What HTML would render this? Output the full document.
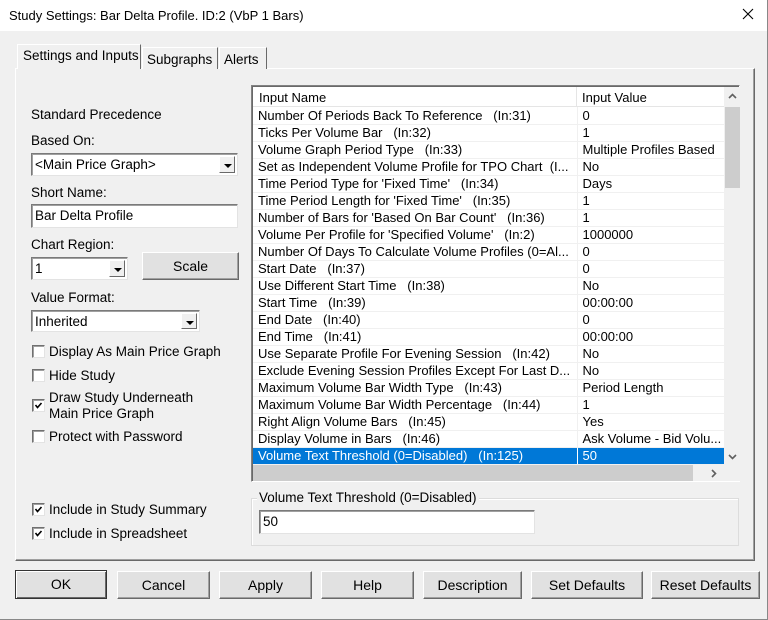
<!DOCTYPE html>
<html><head><style>
*{box-sizing:border-box;margin:0;padding:0}
body{width:768px;height:620px;background:#f0f0f0;font-family:"Liberation Sans",sans-serif;font-size:13px;color:#000;position:relative;overflow:hidden}
.a{position:absolute;white-space:nowrap}
.L{font-size:13.5px}
.title{left:0;top:0;width:768px;height:31px;background:#fff;border-right:1px solid #888}
.panel{left:15px;top:68px;width:740px;height:493px;border:1px solid #fff;border-right-color:#696969;border-bottom-color:#696969;box-shadow:inset -1px -1px 0 #a0a0a0}
.tab{top:46px;height:22px;border:1px solid #fff;border-right-color:#696969;border-bottom:none;padding:3px 4px;background:#f0f0f0;font-size:13.5px}
.edit{background:#fff;border:1px solid #7a7a7a;border-right-color:#e3e3e3;border-bottom-color:#e3e3e3;box-shadow:inset 1px 1px 0 #a0a0a0;padding:3px 3px;font-size:13.5px}
.dd{position:absolute;right:2px;top:2px;width:16px;bottom:2px;background:#f0f0f0;border:1px solid #fff;border-right-color:#696969;border-bottom-color:#696969}
.dd:after{content:"";position:absolute;left:4px;top:7px;border-left:4px solid transparent;border-right:4px solid transparent;border-top:4px solid #000}
.btn{background:#e1e1e1;border:1px solid #fff;border-right-color:#696969;border-bottom-color:#696969;box-shadow:inset -1px -1px 0 #a0a0a0;text-align:center;line-height:26px;font-size:14px}
.cb{width:13px;height:13px;background:#fff;border:1px solid #707070;border-right-color:#e3e3e3;border-bottom-color:#e3e3e3;box-shadow:inset 1px 1px 0 #a0a0a0}
table{border-collapse:collapse;font-size:13px}
td{height:17px;padding:0 0 0 5px;border-bottom:1px solid #f0f0f0;white-space:nowrap;overflow:hidden}
td.v{border-left:1px solid #f0f0f0}
tr.sel td{background:#0078d7;color:#fff}
</style></head><body>
<div class="a title"><span class="a" style="left:9px;top:8px;font-size:13px">Study Settings: Bar Delta Profile. ID:2 (VbP 1 Bars)</span>
<svg class="a" style="left:742px;top:8px" width="12" height="12"><path d="M1 1L11 11M11 1L1 11" stroke="#000" stroke-width="1.1"/></svg></div>
<div class="a" style="left:767px;top:0;width:1px;height:620px;background:#888"></div>
<div class="a" style="left:0;top:619px;width:768px;height:1px;background:#888"></div>

<div class="a panel"></div>
<div class="a tab" style="left:17px;top:44px;height:25px;width:124px;border-left:1px solid #fff;padding-left:5px">Settings and Inputs</div>
<div class="a tab" style="left:142px;top:47px;width:76px;padding-top:4px">Subgraphs</div>
<div class="a tab" style="left:219px;top:47px;width:48px;padding-top:4px">Alerts</div>

<div class="a L" style="left:31px;top:107px">Standard Precedence</div>
<div class="a L" style="left:31px;top:133px">Based On:</div>
<div class="a edit" style="left:31px;top:153px;width:207px;height:23px">&lt;Main Price Graph&gt;<div class="dd"></div></div>
<div class="a L" style="left:31px;top:185px">Short Name:</div>
<div class="a edit" style="left:31px;top:204px;width:207px;height:24px">Bar Delta Profile</div>
<div class="a L" style="left:31px;top:237px">Chart Region:</div>
<div class="a edit" style="left:31px;top:257px;width:97px;height:23px">1<div class="dd"></div></div>
<div class="a btn" style="left:142px;top:252px;width:97px;height:28px">Scale</div>
<div class="a L" style="left:31px;top:290px">Value Format:</div>
<div class="a edit" style="left:31px;top:310px;width:169px;height:22px">Inherited<div class="dd"></div></div>

<div class="a cb" style="left:32px;top:345px"></div><div class="a L" style="left:49px;top:344px">Display As Main Price Graph</div>
<div class="a cb" style="left:32px;top:369px"></div><div class="a L" style="left:49px;top:368px">Hide Study</div>
<div class="a cb" style="left:32px;top:399px"><svg width="11" height="11" style="position:absolute;left:0;top:0"><path d="M2.5 5L4.5 7.5L8.5 3" stroke="#000" stroke-width="1.6" fill="none"/></svg></div>
<div class="a L" style="left:49px;top:390px;line-height:16px">Draw Study Underneath<br>Main Price Graph</div>
<div class="a cb" style="left:32px;top:430px"></div><div class="a L" style="left:49px;top:429px">Protect with Password</div>
<div class="a cb" style="left:32px;top:503px"><svg width="11" height="11" style="position:absolute;left:0;top:0"><path d="M2.5 5L4.5 7.5L8.5 3" stroke="#000" stroke-width="1.6" fill="none"/></svg></div><div class="a L" style="left:49px;top:502px">Include in Study Summary</div>
<div class="a cb" style="left:32px;top:527px"><svg width="11" height="11" style="position:absolute;left:0;top:0"><path d="M2.5 5L4.5 7.5L8.5 3" stroke="#000" stroke-width="1.6" fill="none"/></svg></div><div class="a L" style="left:49px;top:526px">Include in Spreadsheet</div>

<div class="a" style="left:251px;top:85px;width:489px;height:397px;background:#fff;border:1px solid #828282;border-right-color:#fff;border-bottom-color:#fff;box-shadow:inset 1px 1px 0 #696969">
 <div class="a" style="left:1px;top:1px;width:471px;height:20px;border-bottom:1px solid #e5e5e5">
  <span class="a" style="left:6px;top:3px">Input Name</span>
  <div class="a" style="left:323px;top:0;width:1px;height:20px;background:#e5e5e5"></div>
  <span class="a" style="left:329px;top:3px">Input Value</span>
 </div>
 <table class="a" style="left:1px;top:21px;width:471px;table-layout:fixed">
 <col style="width:324px"><col style="width:147px">
 <tr><td>Number Of Periods Back To Reference&nbsp;&nbsp; (In:31)</td><td class="v">0</td></tr>
 <tr><td>Ticks Per Volume Bar&nbsp;&nbsp; (In:32)</td><td class="v">1</td></tr>
 <tr><td>Volume Graph Period Type&nbsp;&nbsp; (In:33)</td><td class="v">Multiple Profiles Based</td></tr>
 <tr><td>Set as Independent Volume Profile for TPO Chart&nbsp; (I...</td><td class="v">No</td></tr>
 <tr><td>Time Period Type for 'Fixed Time'&nbsp;&nbsp; (In:34)</td><td class="v">Days</td></tr>
 <tr><td>Time Period Length for 'Fixed Time'&nbsp;&nbsp; (In:35)</td><td class="v">1</td></tr>
 <tr><td>Number of Bars for 'Based On Bar Count'&nbsp;&nbsp; (In:36)</td><td class="v">1</td></tr>
 <tr><td>Volume Per Profile for 'Specified Volume'&nbsp;&nbsp; (In:2)</td><td class="v">1000000</td></tr>
 <tr><td>Number Of Days To Calculate Volume Profiles (0=Al...</td><td class="v">0</td></tr>
 <tr><td>Start Date&nbsp;&nbsp; (In:37)</td><td class="v">0</td></tr>
 <tr><td>Use Different Start Time&nbsp;&nbsp; (In:38)</td><td class="v">No</td></tr>
 <tr><td>Start Time&nbsp;&nbsp; (In:39)</td><td class="v">00:00:00</td></tr>
 <tr><td>End Date&nbsp;&nbsp; (In:40)</td><td class="v">0</td></tr>
 <tr><td>End Time&nbsp;&nbsp; (In:41)</td><td class="v">00:00:00</td></tr>
 <tr><td>Use Separate Profile For Evening Session&nbsp;&nbsp; (In:42)</td><td class="v">No</td></tr>
 <tr><td>Exclude Evening Session Profiles Except For Last D...</td><td class="v">No</td></tr>
 <tr><td>Maximum Volume Bar Width Type&nbsp;&nbsp; (In:43)</td><td class="v">Period Length</td></tr>
 <tr><td>Maximum Volume Bar Width Percentage&nbsp;&nbsp; (In:44)</td><td class="v">1</td></tr>
 <tr><td>Right Align Volume Bars&nbsp;&nbsp; (In:45)</td><td class="v">Yes</td></tr>
 <tr><td>Display Volume in Bars&nbsp;&nbsp; (In:46)</td><td class="v">Ask Volume - Bid Volu...</td></tr>
 <tr class="sel"><td>Volume Text Threshold (0=Disabled)&nbsp;&nbsp; (In:125)</td><td class="v" style="border-left-color:#fff">50</td></tr>
 </table>
 <div class="a" style="left:472px;top:1px;width:16px;height:378px;background:#f0f0f0">
  <svg class="a" style="left:4px;top:6px" width="9" height="6"><path d="M1 5L4.5 1.5L8 5" stroke="#606060" stroke-width="1.6" fill="none"/></svg>
  <div class="a" style="left:1px;top:20px;width:15px;height:81px;background:#cdcdcd"></div>
  <svg class="a" style="left:4px;top:367px" width="9" height="6"><path d="M1 1L4.5 4.5L8 1" stroke="#606060" stroke-width="1.6" fill="none"/></svg>
 </div>
 <div class="a" style="left:1px;top:379px;width:487px;height:16px;background:#f0f0f0">
  <div class="a" style="left:0;top:0;width:440px;height:16px;background:#cdcdcd"></div>
  <svg class="a" style="left:458px;top:4px" width="6" height="9"><path d="M1 1L4.5 4.5L1 8" stroke="#606060" stroke-width="1.6" fill="none"/></svg>
 </div>
</div>

<div class="a" style="left:251px;top:498px;width:488px;height:48px;border:1px solid #dcdcdc;box-shadow:1px 1px 0 #fff inset"></div>
<div class="a L" style="left:257px;top:490px;background:#f0f0f0;padding:0 2px">Volume Text Threshold (0=Disabled)</div>
<div class="a edit" style="left:259px;top:510px;width:276px;height:24px">50</div>

<div class="a btn" style="left:15px;top:570px;width:92px;height:29px;border:1px solid #333;box-shadow:inset 1px 1px 0 #fff,inset -1px -1px 0 #696969">OK</div>
<div class="a btn" style="left:117px;top:571px;width:93px;height:28px">Cancel</div>
<div class="a btn" style="left:219px;top:571px;width:93px;height:28px">Apply</div>
<div class="a btn" style="left:321px;top:571px;width:93px;height:28px">Help</div>
<div class="a btn" style="left:423px;top:571px;width:99px;height:28px">Description</div>
<div class="a btn" style="left:531px;top:571px;width:112px;height:28px">Set Defaults</div>
<div class="a btn" style="left:651px;top:571px;width:109px;height:28px">Reset Defaults</div>
</body></html>
